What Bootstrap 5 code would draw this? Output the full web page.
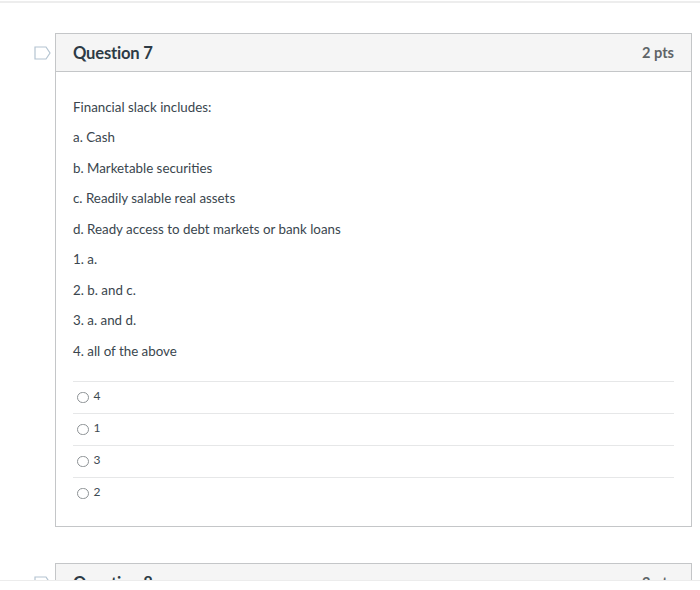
<!DOCTYPE html>
<html lang="en">
<head>
  <meta charset="UTF-8" />
  <meta name="viewport" content="width=device-width, initial-scale=1">
  <title>Question 7</title>
  <link href="https://cdn.jsdelivr.net/npm/bootstrap@5.3.0/dist/css/bootstrap.min.css" rel="stylesheet">
  <style>
    html, body {
      height: 590px;
      overflow: hidden;
      background-color: #fff;
    }
    body {
      font-family: Lato, "Liberation Sans", sans-serif;
      color: #2d3b45;
      font-size: 13.35px;
    }
    /* the visible slice of the quiz page, cut at the bottom */
    .quiz-frame {
      height: 580px;
      overflow: hidden;
      margin-top: 1px;
      padding-top: 30px;
      border-top: 2px solid #ededed;
      border-bottom: 1px solid #ececec;
    }
    .quiz-row {
      display: flex;
      align-items: flex-start;
      padding-left: 30px;
      padding-right: 8px;
      margin-bottom: 36px;
    }
    .quiz-flag {
      flex: 0 0 25px;
      margin-top: 13px;
    }
    .quiz-card {
      flex: 1 1 auto;
      border: 1px solid #c4c6c8;
      border-radius: 0;
      height: 494px;
    }
    .quiz-head {
      height: 38px;
      padding: 0 17px;
      background-color: #f5f5f5;
      border-bottom: 1px solid #c4c6c8;
    }
    .quiz-title {
      padding-top: 2px;
      font-size: 16.6px;
      font-weight: 700;
      color: #2d3b45;
      letter-spacing: -0.2px;
    }
    .quiz-pts {
      font-size: 14.6px;
      font-weight: 700;
      color: #5f6467;
    }
    .quiz-body {
      padding: 25px 17px 0;
    }
    .quiz-line {
      margin: 0;
      height: 30.45px;
      line-height: 20px;
      color: #3a464e;
    }
    .quiz-answers {
      margin-top: 10px;
    }
    .quiz-answer {
      height: 32px;
      padding-left: 4px;
      gap: 5px;
      border-top: 1px solid #e6e7e8;
      font-size: 12px;
      color: #3d4a52;
    }
    .quiz-radio {
      width: 11.5px;
      height: 11.5px;
      border: 1px solid #8d9295;
      border-radius: 50%;
      background-color: #fff;
    }
    .quiz-digit {
      margin-bottom: 2px;
    }
  </style>
</head>
<body>
  <div class="quiz-frame">
    <div class="quiz-row">
      <svg class="quiz-flag" width="17" height="14" viewBox="0 0 17 14">
        <path d="M1 1H12L16 7L12 13H1Z" fill="#fff" stroke="#b4c4d1" stroke-width="1.2"/>
      </svg>
      <div class="quiz-card">
        <div class="quiz-head d-flex justify-content-between align-items-center">
          <span class="quiz-title">Question 7</span>
          <span class="quiz-pts">2 pts</span>
        </div>
        <div class="quiz-body">
          <p class="quiz-line">Financial slack includes:</p>
          <p class="quiz-line">a. Cash</p>
          <p class="quiz-line">b. Marketable securities</p>
          <p class="quiz-line">c. Readily salable real assets</p>
          <p class="quiz-line">d. Ready access to debt markets or bank loans</p>
          <p class="quiz-line">1. a.</p>
          <p class="quiz-line">2. b. and c.</p>
          <p class="quiz-line">3. a. and d.</p>
          <p class="quiz-line">4. all of the above</p>
          <div class="quiz-answers">
            <div class="quiz-answer d-flex align-items-center"><span class="quiz-radio"></span><span class="quiz-digit">4</span></div>
            <div class="quiz-answer d-flex align-items-center"><span class="quiz-radio"></span><span class="quiz-digit">1</span></div>
            <div class="quiz-answer d-flex align-items-center"><span class="quiz-radio"></span><span class="quiz-digit">3</span></div>
            <div class="quiz-answer d-flex align-items-center"><span class="quiz-radio"></span><span class="quiz-digit">2</span></div>
          </div>
        </div>
      </div>
    </div>
    <div class="quiz-row">
      <svg class="quiz-flag" width="17" height="14" viewBox="0 0 17 14">
        <path d="M1 1H12L16 7L12 13H1Z" fill="#fff" stroke="#b4c4d1" stroke-width="1.2"/>
      </svg>
      <div class="quiz-card">
        <div class="quiz-head d-flex justify-content-between align-items-center">
          <span class="quiz-title">Question 8</span>
          <span class="quiz-pts">2 pts</span>
        </div>
      </div>
    </div>
  </div>
  <script src="https://cdn.jsdelivr.net/npm/bootstrap@5.3.0/dist/js/bootstrap.bundle.min.js"></script>
</body>
</html>
